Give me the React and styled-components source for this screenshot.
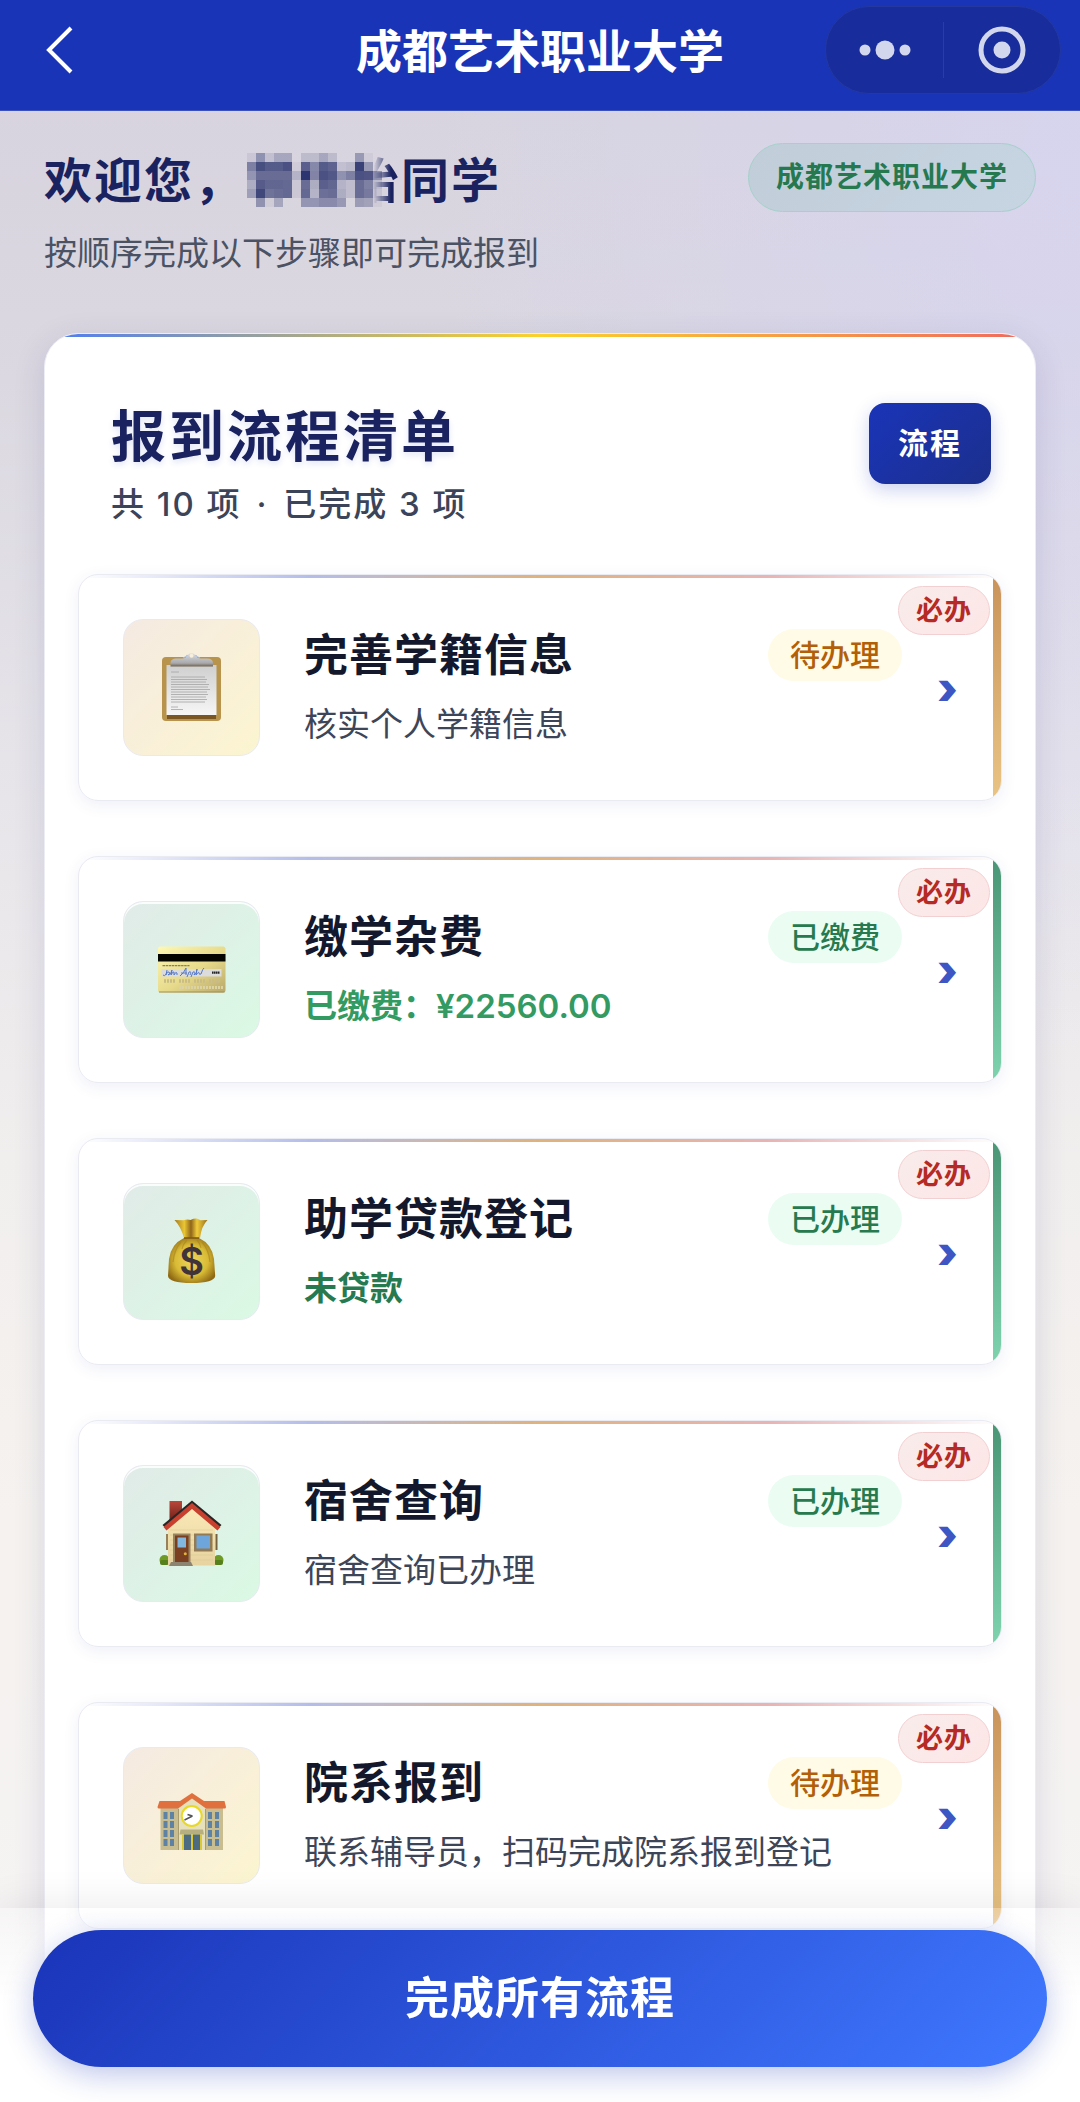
import React from 'react';
import styled, { createGlobalStyle } from 'styled-components';

const GlobalStyle = createGlobalStyle`
  * {
    box-sizing: border-box;
  }

  body {
    margin: 0;
    color: #14182c;
    font-family: Inter, 'Noto Sans CJK SC', sans-serif;
  }

  h1, h2, h3, p, ul {
    margin: 0;
    padding: 0;
  }

  button {
    border: none;
    padding: 0;
    font-family: inherit;
    cursor: pointer;
  }
`;

const Page = styled.div`
  height: 100vh;
  display: flex;
  flex-direction: column;
  background:
    radial-gradient(ellipse 60% 42% at 100% 8%, rgba(214, 212, 242, 0.75), rgba(214, 212, 242, 0)),
    linear-gradient(180deg, #d7d2de 0%, #dbd8e1 18%, #e6e4e9 36%, #f1eeee 55%, #f5f2ef 72%, #f5f4f5 100%);
`;

const NavBar = styled.header`
  flex: none;
  display: grid;
  grid-template-columns: 1fr auto 1fr;
  align-items: center;
  padding: 6px 19px 16px;
  background: #1934b6;
  border-bottom: 1px solid #3a50bd;
`;

const NavTitle = styled.h1`
  padding-top: 2px;
  color: #fff;
  font-size: 46px;
  line-height: 64px;
  font-weight: 700;
`;

const BackButton = styled.button`
  justify-self: start;
  display: flex;
  padding: 18px 20px;
  background: none;
`;

const Capsule = styled.div`
  justify-self: end;
  display: flex;
  align-items: center;
  height: 88px;
  border: 1px solid #2438a0;
  border-radius: 44px;
  background: #182d9b;
`;

const CapsuleButton = styled.button`
  display: flex;
  align-items: center;
  justify-content: center;
  width: 117px;
  height: 56px;
  background: none;

  & + & {
    border-left: 1px solid #2a3da6;
  }
`;

const Scroller = styled.main`
  flex: 1;
  min-height: 0;
  overflow-y: auto;
  scrollbar-width: none;
  padding: 32px 44px 0;
`;

const Welcome = styled.section`
  display: flex;
  justify-content: space-between;
  align-items: flex-start;
  margin-bottom: 56px;
`;

const Greeting = styled.h2`
  display: flex;
  color: #1a2360;
  font-size: 48px;
  line-height: 76px;
  font-weight: 700;
  letter-spacing: 2px;
`;

const HiddenName = styled.span`
  position: relative;
  padding-left: 107px;

  svg {
    position: absolute;
    left: 3px;
    top: 10px;
  }
`;

const FadedChar = styled.span`
  mask-image: linear-gradient(90deg, transparent 45%, #000 80%);
`;

const Hint = styled.p`
  margin-top: 10px;
  color: #4a5264;
  font-size: 33px;
  line-height: 48px;
`;

const SchoolTag = styled.span`
  padding: 0 27px;
  border: 1px solid #a6d0cb;
  border-radius: 35px;
  background: linear-gradient(135deg, #c1ced9, #c7d4e2);
  color: #26794f;
  font-size: 28px;
  line-height: 67px;
  font-weight: 600;
  letter-spacing: 1px;
`;

const Card = styled.section`
  position: relative;
  overflow: hidden;
  padding: 66px 33px 240px;
  border: 1px solid #ececf4;
  border-radius: 34px 34px 0 0;
  background: #fff;
  box-shadow: 0 8px 32px rgba(50, 50, 130, 0.14);

  &::before {
    content: '';
    position: absolute;
    inset: 0 0 auto;
    height: 3px;
    background: linear-gradient(90deg, #4c7cf5, #fbd12c 50%, #f0685e);
  }
`;

const CardHeader = styled.div`
  display: flex;
  justify-content: space-between;
  align-items: flex-start;
  padding: 0 11px 0 33px;
  margin-bottom: 46px;
`;

const CardTitle = styled.h2`
  color: #1a2360;
  font-size: 55px;
  line-height: 72px;
  font-weight: 700;
  letter-spacing: 3px;
  text-shadow: 0 3px 6px rgba(26, 52, 184, 0.12);
`;

const Summary = styled.p`
  margin-top: 8px;
  color: #3b4458;
  font-size: 33px;
  line-height: 48px;
  font-weight: 500;
  letter-spacing: 2px;
`;

const Dot = styled.span`
  margin: 0 4px;
`;

const FlowButton = styled.button`
  margin-top: 3px;
  padding: 0 29px;
  border-radius: 16px;
  background: linear-gradient(135deg, #1a34b8, #1c2f8c);
  box-shadow: 0 6px 18px rgba(26, 52, 184, 0.22);
  color: #fff;
  font-size: 30px;
  line-height: 81px;
  font-weight: 600;
  letter-spacing: 2px;
`;

const StepList = styled.ul`
  display: flex;
  flex-direction: column;
  gap: 55px;
  list-style: none;
`;

const StepItem = styled.li`
  border-radius: 20px;
  box-shadow: 0 4px 16px rgba(50, 60, 150, 0.08);
`;

const StepLink = styled.a`
  position: relative;
  overflow: hidden;
  display: flex;
  align-items: center;
  padding: 44px;
  border: 1px solid #e9eaf2;
  border-radius: 20px;
  background: #fff;
  color: inherit;
  text-decoration: none;

  &::before {
    content: '';
    position: absolute;
    inset: 0 0 auto;
    height: 3px;
    background: linear-gradient(90deg, transparent, #b3bdea 25%, #e0b27c 50%, #e8b4b4 75%, transparent);
  }

  &::after {
    content: '';
    position: absolute;
    inset: 3px 0 0 auto;
    width: 8px;
    background: ${props => props.$done
      ? 'linear-gradient(180deg, #4a9676, #7fd3ae)'
      : 'linear-gradient(180deg, #ca945b, #e9c485)'};
  }
`;

const IconTile = styled.span`
  flex: none;
  display: flex;
  align-items: center;
  justify-content: center;
  width: 137px;
  height: 137px;
  margin-right: 44px;
  border: 1px solid #e8eaf0;
  border-radius: 20px;
  background: ${props => props.$done
    ? 'linear-gradient(135deg, #e1ebe8, #daf9e4)'
    : 'linear-gradient(135deg, #f5eae2, #fcf5d0)'};
  box-shadow: ${props => props.$done ? 'inset 0 2px 0 #fafdfb' : 'none'};
`;

const StepBody = styled.span`
  flex: 1;
  min-width: 0;
`;

const StepTop = styled.span`
  display: flex;
  align-items: center;
  justify-content: space-between;
`;

const StepTitle = styled.strong`
  font-size: 44px;
  line-height: 56px;
  font-weight: 700;
  letter-spacing: 1px;
`;

const StepNote = styled.span`
  display: block;
  margin-top: 17px;
  color: ${props => props.$color || '#3d4558'};
  font-size: 33px;
  line-height: 48px;
  font-weight: ${props => (props.$color ? 600 : 400)};
`;

const Status = styled.span`
  padding: 0 22px;
  border-radius: 26px;
  background: ${props => (props.$done ? '#ebfdf3' : '#fffbe6')};
  color: ${props => (props.$done ? '#277a4f' : '#b35f08')};
  font-size: 30px;
  line-height: 52px;
  font-weight: 500;
`;

const Arrow = styled.span`
  flex: none;
  width: 55px;
  padding-left: 35px;
  color: #3d56c4;
  font-size: 44px;
  line-height: 56px;
  font-weight: 900;
`;

const Required = styled.span`
  position: absolute;
  top: 11px;
  right: 11px;
  padding: 0 17px;
  border: 1px solid #f2cfd1;
  border-radius: 25px;
  background: linear-gradient(135deg, #f8eceb, #fde6e6);
  color: #b52a25;
  font-size: 27px;
  line-height: 47px;
  font-weight: 600;
  letter-spacing: 1px;
`;

const BottomBar = styled.footer`
  position: fixed;
  inset: auto 0 0;
  padding: 22px 33px 35px;
  background: linear-gradient(180deg, rgba(255, 255, 255, 0.2), #fff 50%);
  box-shadow: 0 -6px 36px rgba(0, 0, 0, 0.07);
`;

const SubmitButton = styled.button`
  display: block;
  width: 100%;
  border-radius: 69px;
  background: linear-gradient(135deg, #1a34b8, #3f78ff);
  box-shadow: 0 8px 30px rgba(26, 52, 184, 0.28);
  color: #fff;
  font-size: 44px;
  line-height: 137px;
  font-weight: 700;
  letter-spacing: 1px;
`;

// opacity of every mosaic cell, row by row, in percent
const MOSAIC = [
  [8, 40, 12, 27, 27, 0, 15, 15, 27, 15, 0, 0, 35, 5],
  [50, 80, 72, 72, 78, 5, 70, 45, 72, 68, 12, 16, 88, 35],
  [38, 62, 62, 62, 62, 20, 95, 48, 78, 74, 40, 50, 78, 76, 40],
  [24, 72, 66, 66, 64, 8, 62, 24, 70, 66, 20, 14, 62, 50, 15],
  [32, 84, 58, 62, 64, 8, 64, 20, 60, 62, 24, 14, 62, 54, 10],
  [0, 40, 5, 28, 0, 0, 38, 38, 44, 44, 36, 0, 34, 30, 5],
];

const Mosaic = () => (
  <svg width="135" height="54" viewBox="0 0 135 54" shapeRendering="crispEdges" aria-hidden="true">
    {MOSAIC.map((row, y) =>
      row.map((value, x) => (
        <rect key={`${x}-${y}`} x={x * 9} y={y * 9} width="9" height="9" fill="#232c68" opacity={value / 100} />
      ))
    )}
  </svg>
);

const ClipboardIcon = () => (
  <svg width="72" height="72" viewBox="0 0 72 72" aria-hidden="true">
    <defs>
      <linearGradient id="paper" x1="0" y1="0" x2="0" y2="1">
        <stop offset="0" stopColor="#cfcfcf" />
        <stop offset="1" stopColor="#f6f6f6" />
      </linearGradient>
      <linearGradient id="clip" x1="0" y1="0" x2="0" y2="1">
        <stop offset="0" stopColor="#d9dde2" />
        <stop offset="0.75" stopColor="#a9a9ac" />
        <stop offset="1" stopColor="#6f6250" />
      </linearGradient>
    </defs>
    <rect x="6" y="5" width="59" height="64" rx="4" fill="#b7934b" />
    <rect x="11" y="61" width="49" height="6" fill="#7a5722" />
    <rect x="10.5" y="13" width="50" height="50" fill="url(#paper)" />
    <path d="M15 20h8M15 25h34M15 27.5h36M15 30h35M15 32.500h38M15 35h37M15 37.5h39M15 40h36M15 42.5h37M15 45h35M15 47.5h36M15 50h34M15 55h7M15 57.5h12" stroke="#a3a3a3" strokeWidth="0.8" />
    <path d="M14.500 14.500v-3.500q0-4.500 6-4.500h5.500q4 0 5.500-3a4.600 4.600 0 0 1 8 0q1.500 3 5.500 3h6q6 0 6 4.500v3.500z" fill="url(#clip)" />
    <path d="M27 5.800q3-.5 4.500-2.800M44 5.800q-3-.5-4.500-2.800" stroke="#9dbbe0" strokeWidth="1.2" fill="none" />
    <circle cx="35.500" cy="3.800" r="2" fill="#f7efdc" />
  </svg>
);

const BankCardIcon = () => (
  <svg width="72" height="72" viewBox="0 0 72 72" aria-hidden="true">
    <defs>
      <linearGradient id="plastic" x1="0" y1="0" x2="1" y2="1">
        <stop offset="0" stopColor="#fdf8b4" />
        <stop offset="0.55" stopColor="#e6d98a" />
        <stop offset="1" stopColor="#b9a86a" />
      </linearGradient>
    </defs>
    <rect x="2" y="12.500" width="67.500" height="46" rx="2.500" fill="url(#plastic)" />
    <path d="M3 58h65.500" stroke="#a08f58" />
    <rect x="2" y="20" width="67.500" height="7.500" fill="#050500" />
    <path d="M6.500 31.700h27" stroke="#8b8155" strokeWidth="1.2" strokeDasharray="2.500 .6" />
    <rect x="5.500" y="35" width="60" height="7.500" fill="#dcdcdc" />
    <path d="M7 41q3 2.500 4-5M10 41q1-4 3-3t-1 3q3 0 4-5l-1 5q2-4 3-3l0 3q2-4 3-2l0 2M24 42q4-3 6-8l0 7M25 39h6M31 43l2-5q3-1 1 3M35 43l2-5q3-1 1 3q3-1 3-6l-1 6q3-4 3-2t2 1q2-6 3-6" stroke="#5478c8" strokeWidth="1" fill="none" />
    <path d="M56 38.700h7.500" stroke="#222" strokeWidth="2.2" strokeDasharray="1.600 .4" />
    <path d="M8 47h59" stroke="#c9bc85" strokeWidth="3.5" strokeDasharray="2 1 2 1 2 1 2 4" />
    <path d="M23 53.500h44" stroke="#ddd3a2" strokeWidth="3" strokeDasharray="2 1" />
  </svg>
);

const MoneyBagIcon = () => (
  <svg width="72" height="72" viewBox="0 0 72 72" aria-hidden="true">
    <defs>
      <radialGradient id="bag" cx="0.5" cy="0.5" r="0.58">
        <stop offset="0" stopColor="#ecd75c" />
        <stop offset="0.6" stopColor="#d9ba35" />
        <stop offset="1" stopColor="#8f6913" />
      </radialGradient>
      <linearGradient id="neck" x1="0" y1="0" x2="1" y2="0">
        <stop offset="0" stopColor="#a57a1c" />
        <stop offset="0.3" stopColor="#e9c634" />
        <stop offset="0.5" stopColor="#8f651a" />
        <stop offset="0.68" stopColor="#f0cc3b" />
        <stop offset="1" stopColor="#9a701c" />
      </linearGradient>
    </defs>
    <path d="M18.500 4q5 0 9 .3 4-1.300 7-.2 4-2 7-1.300l3 1.500 7-.3q-6 6-7.500 18H28Q25 11 18.500 4z" fill="url(#neck)" />
    <path d="M28 22h15q13 6 15 21l1.200 17q-1 7-23.700 7T12 60l1-17q2-15 15-21z" fill="url(#bag)" />
    <path d="M28 22h15" stroke="#7b5616" strokeWidth="1.5" />
    <path d="M25 26q-7 8-8 20M31 24q-4 4-5 9M46 26q7 8 8 20M41 24q3 3 4 8" stroke="#a98420" strokeWidth="1.2" fill="none" opacity="0.6" />
    <text x="35.500" y="59" textAnchor="middle" fontFamily="Inter" fontSize="38" fontWeight="600" fill="#40333a">$</text>
  </svg>
);

const HouseIcon = () => (
  <svg width="72" height="72" viewBox="0 0 72 72" aria-hidden="true">
    <defs>
      <linearGradient id="wall" x1="0" y1="0" x2="0" y2="1">
        <stop offset="0" stopColor="#fbeab8" />
        <stop offset="1" stopColor="#e6d3a0" />
      </linearGradient>
      <linearGradient id="chimney" x1="0" y1="0" x2="0" y2="1">
        <stop offset="0" stopColor="#bb473a" />
        <stop offset="1" stopColor="#6b2018" />
      </linearGradient>
    </defs>
    <rect x="13.500" y="3" width="12.500" height="20" fill="url(#chimney)" />
    <circle cx="8.500" cy="62" r="5" fill="#6e9a25" />
    <rect x="4" y="62" width="9" height="5" rx="2" fill="#56801c" />
    <circle cx="62.500" cy="62" r="5" fill="#6e9a25" />
    <rect x="58" y="62" width="9" height="5" rx="2" fill="#56801c" />
    <path d="M12 28L36 7l23 21v39.500H12z" fill="url(#wall)" />
    <path d="M14 32h43M14 37h43M14 42h43M14 47h43M14 52h43M14 57h43M14 62h43" stroke="#d9c48e" strokeWidth="0.5" />
    <path d="M36 2.500L65.500 27l-3.500 3.500L36 9.500 10 30.500 6.500 27z" fill="#2b2626" />
    <path d="M36 5L64.500 29l-3 3.500L36 11 10.500 32.500 7.500 29z" fill="#c8412f" />
    <rect x="10" y="36" width="2" height="16" fill="#98805a" />
    <rect x="59.500" y="36" width="2" height="16" fill="#75603f" />
    <rect x="17" y="35.500" width="17.500" height="30" fill="#9b8560" />
    <rect x="19" y="37.500" width="13.500" height="28" fill="#7a3f20" />
    <rect x="21.500" y="39.500" width="8.500" height="10" fill="#82b8e0" />
    <circle cx="29.300" cy="55.800" r="1.500" fill="#e2b33a" />
    <rect x="38" y="35.500" width="18.500" height="18" fill="#917a54" />
    <rect x="40.500" y="37.500" width="13.500" height="13" fill="#6ea6dc" />
    <path d="M15 64h20l2 4H13z" fill="#8d8371" />
  </svg>
);

const SchoolIcon = () => (
  <svg width="72" height="72" viewBox="0 0 72 72" aria-hidden="true">
    <rect x="4.500" y="27" width="62.500" height="43" fill="#c8bd90" />
    <path d="M22.500 24L36 14l13.500 10v46h-27z" fill="#e6e0bd" />
    <path d="M3.500 21H24L36 13 48 21h20.500l1.500 6q0 1.500-1.500 1.500H50L36 18.500 22 28.500H3q-1.500 0-1.500-1.500z" fill="#e0703d" />
    <path d="M22.500 29v41M49.500 29v41" stroke="#a89b6c" />
    {[32, 41, 50, 59].map(y => (
      <path key={y} d={`M7.500 ${y}h4v7h-4zM14 ${y}h4v7h-4zM52 ${y}h4v7h-4zM59 ${y}h4v7h-4z`} fill="#5d82a3" />
    ))}
    <circle cx="35.700" cy="36" r="10" fill="#fff" stroke="#e9d824" strokeWidth="2" />
    <path d="M36.500 36l-8 4M36.500 36l-5-1.500" stroke="#555" strokeWidth="1.5" />
    <path d="M24.500 49.500h22.500l1 5H23.500z" fill="#b8af80" />
    <rect x="26" y="54.500" width="20" height="15.500" fill="#dbc832" />
    <rect x="28" y="54.500" width="7" height="15.500" fill="#4d6c82" />
    <rect x="37" y="54.500" width="7" height="15.500" fill="#4d6c82" />
  </svg>
);

const steps = [
  { id: 'profile', title: '完善学籍信息', note: '核实个人学籍信息', status: '待办理', done: false, Icon: ClipboardIcon },
  { id: 'fees', title: '缴学杂费', note: '已缴费：¥22560.00', noteColor: '#339a62', status: '已缴费', done: true, Icon: BankCardIcon },
  { id: 'loan', title: '助学贷款登记', note: '未贷款', noteColor: '#277a4f', status: '已办理', done: true, Icon: MoneyBagIcon },
  { id: 'dorm', title: '宿舍查询', note: '宿舍查询已办理', status: '已办理', done: true, Icon: HouseIcon },
  { id: 'college', title: '院系报到', note: '联系辅导员，扫码完成院系报到登记', status: '待办理', done: false, Icon: SchoolIcon },
];

const Step = ({ id, title, note, noteColor, status, done, Icon }) => (
  <StepItem>
    <StepLink href={`#${id}`} $done={done}>
      <IconTile $done={done}>
        <Icon />
      </IconTile>
      <StepBody>
        <StepTop>
          <StepTitle>{title}</StepTitle>
          <Status $done={done}>{status}</Status>
        </StepTop>
        <StepNote $color={noteColor}>{note}</StepNote>
      </StepBody>
      <Arrow aria-hidden="true">›</Arrow>
      <Required>必办</Required>
    </StepLink>
  </StepItem>
);

const App = () => {
  return (
    <Page lang="zh-CN">
      <GlobalStyle />
      <NavBar>
        <BackButton aria-label="返回">
          <svg width="40" height="48" viewBox="0 0 40 48" fill="none" stroke="#fff" strokeWidth="4">
            <path d="M32 2L10 24l22 22" />
          </svg>
        </BackButton>
        <NavTitle>成都艺术职业大学</NavTitle>
        <Capsule>
          <CapsuleButton aria-label="更多">
            <svg width="52" height="20" viewBox="0 0 52 20" fill="#d3d7ee">
              <circle cx="6" cy="10" r="5.500" />
              <circle cx="26" cy="10" r="9.500" />
              <circle cx="46" cy="10" r="5.500" />
            </svg>
          </CapsuleButton>
          <CapsuleButton aria-label="关闭">
            <svg width="48" height="48" viewBox="0 0 48 48">
              <circle cx="24" cy="24" r="21" fill="none" stroke="#d3d7ee" strokeWidth="5" />
              <circle cx="24" cy="24" r="8.500" fill="#d3d7ee" />
            </svg>
          </CapsuleButton>
        </Capsule>
      </NavBar>

      <Scroller>
        <Welcome>
          <div>
            <Greeting>
              欢迎您，
              <HiddenName>
                <FadedChar>怡</FadedChar>
                <Mosaic />
              </HiddenName>
              同学
            </Greeting>
            <Hint>按顺序完成以下步骤即可完成报到</Hint>
          </div>
          <SchoolTag>成都艺术职业大学</SchoolTag>
        </Welcome>

        <Card>
          <CardHeader>
            <div>
              <CardTitle>报到流程清单</CardTitle>
              <Summary>
                共 10 项 <Dot>·</Dot> 已完成 3 项
              </Summary>
            </div>
            <FlowButton>流程</FlowButton>
          </CardHeader>
          <StepList>
            {steps.map(step => (
              <Step key={step.id} {...step} />
            ))}
          </StepList>
        </Card>
      </Scroller>

      <BottomBar>
        <SubmitButton>完成所有流程</SubmitButton>
      </BottomBar>
    </Page>
  );
};

export default App;
